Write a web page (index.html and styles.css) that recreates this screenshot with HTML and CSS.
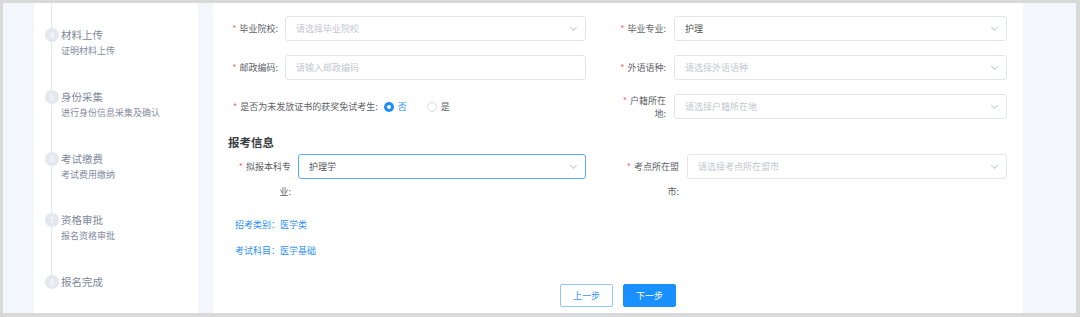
FILE: index.html
```html
<!DOCTYPE html>
<html lang="zh-CN">
<head>
<meta charset="utf-8">
<title>报名</title>
<link rel="stylesheet" href="styles.css">
</head>
<body>
<div class="frame">
  <aside class="sidebar">
    <div class="track"></div>
    <div class="step">
      <span class="dot">4</span>
      <div class="step-text"><div class="step-title">材料上传</div><div class="step-sub">证明材料上传</div></div>
    </div>
    <div class="step">
      <span class="dot">5</span>
      <div class="step-text"><div class="step-title">身份采集</div><div class="step-sub">进行身份信息采集及确认</div></div>
    </div>
    <div class="step">
      <span class="dot">6</span>
      <div class="step-text"><div class="step-title">考试缴费</div><div class="step-sub">考试费用缴纳</div></div>
    </div>
    <div class="step">
      <span class="dot">7</span>
      <div class="step-text"><div class="step-title">资格审批</div><div class="step-sub">报名资格审批</div></div>
    </div>
    <div class="step">
      <span class="dot">8</span>
      <div class="step-text"><div class="step-title">报名完成</div></div>
    </div>
  </aside>

  <main class="panel">
    <div class="grid grid-top">
      <div class="col">
        <div class="item">
          <label class="label lw50"><i class="req">*</i>毕业院校:</label>
          <div class="select w301"><span class="ph">请选择毕业院校</span><span class="arrow"></span></div>
        </div>
        <div class="item">
          <label class="label lw50"><i class="req">*</i>邮政编码:</label>
          <div class="select w301"><span class="ph">请输入邮政编码</span></div>
        </div>
        <div class="item radio-item">
          <label class="label auto"><i class="req">*</i>是否为未发放证书的获奖免试考生:</label>
          <div class="radios">
            <span class="radio on"><span class="circle"></span>否</span>
            <span class="radio"><span class="circle"></span>是</span>
          </div>
        </div>
      </div>
      <div class="col">
        <div class="item">
          <label class="label lw54"><i class="req">*</i>毕业专业:</label>
          <div class="select w333"><span class="val">护理</span><span class="arrow"></span></div>
        </div>
        <div class="item">
          <label class="label lw54"><i class="req">*</i>外语语种:</label>
          <div class="select w333"><span class="ph">请选择外语语种</span><span class="arrow"></span></div>
        </div>
        <div class="item">
          <label class="label lw54 tight"><i class="req">*</i>户籍所在地:</label>
          <div class="select w333"><span class="ph">请选择户籍所在地</span><span class="arrow"></span></div>
        </div>
      </div>
    </div>

    <h3 class="heading">报考信息</h3>

    <div class="grid grid-bottom">
      <div class="col">
        <div class="item">
          <label class="label lw58"><i class="req">*</i>拟报本科专业:</label>
          <div class="select w288 focus"><span class="val">护理学</span><span class="arrow"></span></div>
        </div>
      </div>
      <div class="col">
        <div class="item">
          <label class="label lw54"><i class="req">*</i>考点所在盟市:</label>
          <div class="select w320"><span class="ph">请选择考点所在盟市</span><span class="arrow"></span></div>
        </div>
      </div>
    </div>

    <div class="info">
      <p>招考类别：医学类</p>
      <p>考试科目：医学基础</p>
    </div>

    <div class="actions">
      <button class="btn ghost">上一步</button>
      <button class="btn primary">下一步</button>
    </div>
  </main>
</div>
</body>
</html>
```

FILE: styles.css
```css
* { box-sizing: border-box; }
html, body { margin: 0; padding: 0; }
body {
  font-family: "Noto Sans CJK SC", "Noto Sans", sans-serif;
  background: #ffffff;
}
.frame {
  width: 1080px;
  height: 317px;
  border-top: 3px solid #d9d9d9;
  border-left: 3px solid #d9d9d9;
  border-right: 4px solid #d9d9d9;
  border-bottom: 4px solid #d9d9d9;
  background: #f3f6fb;
  display: flex;
  gap: 15px;
  padding-left: 31px;
  overflow: hidden;
}

/* sidebar */
.sidebar {
  width: 164px;
  background: #fff;
  position: relative;
  padding: 25px 0 0 11px;
}
.track {
  position: absolute;
  left: 17px;
  top: 0;
  width: 1px;
  height: 280px;
  background: #e4e7ed;
}
.step {
  position: relative;
  display: flex;
  gap: 2px;
  height: 61.8px;
}
.dot {
  width: 14px;
  height: 14px;
  border-radius: 50%;
  background: #e4e7ee;
  color: #fff;
  font-size: 8px;
  line-height: 14px;
  text-align: center;
  flex: none;
}
.step-title {
  font-size: 10.5px;
  line-height: 14px;
  color: #7e879b;
}
.step-sub {
  margin-top: 3px;
  font-size: 9px;
  line-height: 12px;
  color: #848c9f;
}

/* panel */
.panel {
  width: 810px;
  background: #fff;
  padding: 13px 0 0 15px;
}
.grid { display: flex; }
.grid-top { gap: 26px; }
.grid-bottom { gap: 39px; margin-left: 5px; }
.grid-bottom .col:first-child { width: 353px; }
.col { display: flex; flex-direction: column; gap: 14px; }
.item { display: flex; align-items: flex-start; gap: 7px; }
.grid-top .col:last-child .item { gap: 8px; }
.grid-bottom .col:last-child .item { gap: 8px; }
.label {
  font-size: 9px;
  line-height: 25px;
  color: #606266;
  text-align: right;
  flex: none;
}
.label.tight { line-height: 13px; padding-top: 0; }
.req {
  font-style: normal;
  color: #f56c6c;
  margin-right: 3px;
}
.lw50 { width: 50px; }
.lw54 { width: 54px; }
.lw58 { width: 58px; }
.label.auto { width: auto; padding-left: 5px; }
.select {
  height: 25px;
  border: 1px solid #e2e5ea;
  border-radius: 3px;
  display: flex;
  align-items: center;
  justify-content: space-between;
  padding: 0 9px 0 10px;
  font-size: 9px;
}
.select.focus { border-color: #5aa9f6; }
.w301 { width: 301px; }
.w333 { width: 333px; }
.w288 { width: 288px; }
.w320 { width: 320px; }
.ph { color: #c3c7cf; }
.val { color: #505257; }
.arrow {
  width: 5px;
  height: 5px;
  border-right: 1px solid #c7cbd2;
  border-bottom: 1px solid #c7cbd2;
  transform: rotate(45deg);
  margin-top: -3px;
}
.radio-item { height: 25px; align-items: center; gap: 6px; }
.radios { display: flex; align-items: center; gap: 20px; }
.radio {
  display: flex;
  align-items: center;
  gap: 4px;
  font-size: 9px;
  color: #606266;
}
.radio .circle {
  width: 10px;
  height: 10px;
  border-radius: 50%;
  border: 1px solid #dcdfe6;
  background: #fff;
  position: relative;
}
.radio.on { color: #2a8cf0; }
.radio.on .circle {
  border: none;
  background: #1d8cf8;
}
.radio.on .circle::after {
  content: "";
  position: absolute;
  left: 3px;
  top: 3px;
  width: 4px;
  height: 4px;
  border-radius: 50%;
  background: #fff;
}
.heading {
  margin: 14px 0 4px;
  font-size: 11.5px;
  line-height: 16px;
  font-weight: 700;
  color: #3a3d43;
}
.info {
  margin: 14px 0 0 7px;
}
.info p {
  margin: 0;
  font-size: 9px;
  line-height: 14px;
  color: #2f8ff0;
}
.info p + p { margin-top: 12px; }
.actions {
  display: flex;
  justify-content: center;
  gap: 10px;
  margin: 26px 0 0 -15px;
}
.btn {
  width: 53px;
  height: 23px;
  border-radius: 2px;
  font-family: inherit;
  font-size: 9px;
  padding: 0;
  cursor: pointer;
}
.btn.ghost {
  background: #fff;
  border: 1px solid #91c8fb;
  color: #3a95f2;
}
.btn.primary {
  background: #1890ff;
  border: 1px solid #1890ff;
  color: #fff;
}
```
